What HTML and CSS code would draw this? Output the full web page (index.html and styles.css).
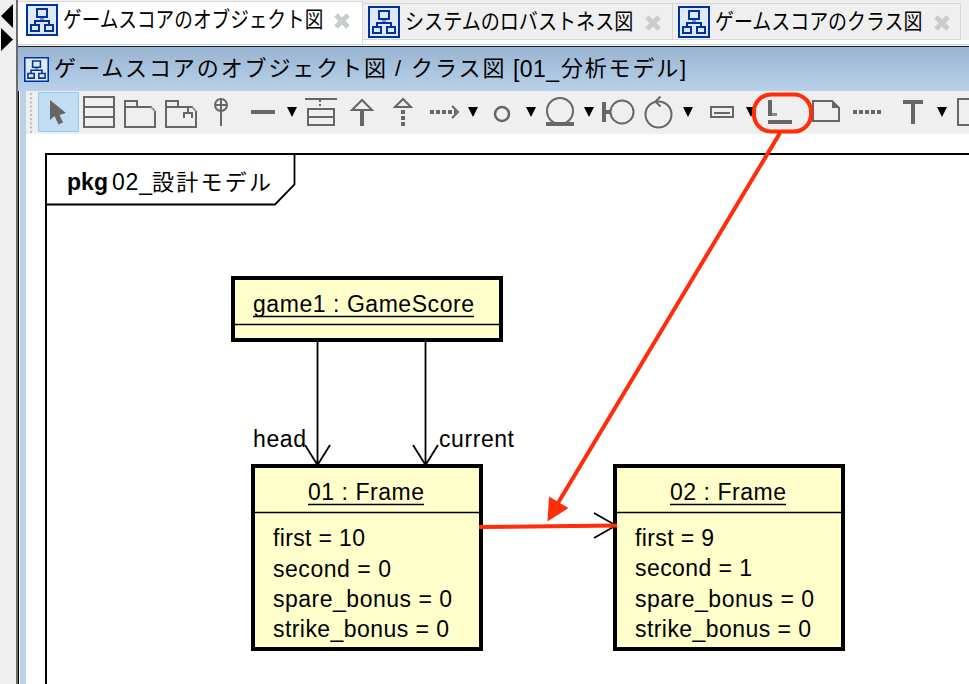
FILE: index.html
```html
<!DOCTYPE html>
<html lang="ja">
<head>
<meta charset="utf-8">
<title>ゲームスコアのオブジェクト図</title>
<link rel="stylesheet" href="styles.css">
</head>
<body>
<svg class="defs" aria-hidden="true">
  <symbol id="diagram" viewBox="0 0 32 32">
    <path d="M1 1H31V31H1Z" fill="#dfe9f8"/>
    <path d="M14 14H18V16H14Z" fill="#6f8fcf"/>
    <path d="M1 1H31V31H1ZM11 5H21V13H11ZM9 20V17H23V20M5 21H13V27H5ZM19 21H27V27H19Z" fill="none" stroke="#0033a0" stroke-width="2"/>
  </symbol>
  <symbol id="close" viewBox="0 0 16 16">
    <path d="M2 2L14 14M14 2L2 14" stroke="#c8cdcb" stroke-width="5" fill="none"/>
  </symbol>
</svg>
<div class="app">
  <aside class="rail">
    <svg width="16" height="52" viewBox="0 0 16 52"><path d="M13 4V28L1 16ZM1 28V51L13 39.500Z"/></svg>
  </aside>
  <main class="main">
    <nav class="tabs">
      <div class="tab active"><svg class="tab-icon"><use href="#diagram"/></svg><span class="label w1"><b>ゲームスコアのオブジェクト図</b></span><svg class="close"><use href="#close"/></svg></div>
      <div class="tab second"><svg class="tab-icon"><use href="#diagram"/></svg><span class="label w2"><b>システムのロバストネス図</b></span><svg class="close"><use href="#close"/></svg></div>
      <div class="tab third"><svg class="tab-icon"><use href="#diagram"/></svg><span class="label w3"><b>ゲームスコアのクラス図</b></span><svg class="close"><use href="#close"/></svg></div>
    </nav>
    <header class="title"><svg class="title-icon"><use href="#diagram"/></svg><h1><span class="kana-a">ゲームスコアのオブジェクト図</span><span class="slash">/</span><span class="kana-b">クラス図</span><span class="num">[01_</span><span class="kana-c">分析モデル</span><span class="bracket">]</span></h1></header>
    <div class="body">
      <div class="edge"></div>
      <div class="content">
        <div class="toolbar">
          <svg width="12" viewBox="26 91 12 43"><path d="M31 93V133" stroke="#bbb" stroke-width="2" stroke-dasharray="2 2.200"/></svg>
          <svg width="42" viewBox="38 91 42 43"><path d="M38.500 92.500H78.500V131.500H38.500Z" fill="#c2dcf2" stroke="#90c8f6" stroke-width="1"/><path d="M50 100V120L54.500 116L58.500 124.500L63 122.500L59.500 115L66 113Z" fill="#666" stroke="none"/></svg>
          <svg width="40" viewBox="80 91 40 43"><path d="M84 97H114V127H84ZM84 107H114M84 117H114"/></svg>
          <svg width="40" viewBox="120 91 40 43"><path d="M152 107H125V127H155V111M125 107V101H137V107"/><path d="M151 107L155 111" stroke="#999"/></svg>
          <svg width="42" viewBox="160 91 42 43"><path d="M193 107H166V127H196V111M166 107V101H178V107M184 118V113H192V118M188 113V108"/><path d="M192 107L196 111" stroke="#999"/></svg>
          <svg width="43" viewBox="202 91 43 43"><circle cx="221" cy="105" r="6"/><path d="M221 98V126M215 105H227"/></svg>
          <svg width="55" viewBox="245 91 55 43"><path d="M251 112H275" stroke-width="4"/><path class="drop" d="M287 107H297L292 117Z"/></svg>
          <svg width="43" viewBox="300 91 43 43"><path d="M305 99H337M308 109H334V125H308ZM308 117H334"/><path d="M320 100V108" stroke-dasharray="2 2"/></svg>
          <svg width="41" viewBox="343 91 41 43"><path d="M352 110L362 100L372 110Z"/><path d="M362 110V126" stroke-width="4"/></svg>
          <svg width="41" viewBox="384 91 41 43"><path d="M395 107L403 99L411 107Z"/><path d="M403 110V126" stroke-width="4" stroke-dasharray="4 2"/></svg>
          <svg width="60" viewBox="425 91 60 43"><path d="M430 112H456" stroke-width="4" stroke-dasharray="4 2"/><path d="M452 106L458 112L452 118"/><path class="drop" d="M468 107H478L473 117Z"/></svg>
          <svg width="55" viewBox="485 91 55 43"><circle cx="502" cy="114" r="7" stroke-width="2.500"/><path class="drop" d="M526 107H536L531 117Z"/></svg>
          <svg width="57" viewBox="540 91 57 43"><circle cx="560" cy="111" r="13"/><path d="M546 124H574" stroke-width="4"/><path class="drop" d="M584 107H594L589 117Z"/></svg>
          <svg width="43" viewBox="597 91 43 43"><path d="M604 102V122M604 112H610" stroke-width="4"/><circle cx="622" cy="112" r="11.500"/></svg>
          <svg width="60" viewBox="640 91 60 43"><circle cx="658.500" cy="114.500" r="13"/><path d="M660.500 96.500L655.500 101.500L660.500 106.500" stroke-width="2"/><path class="drop" d="M683 107H693L688 117Z"/></svg>
          <svg width="60" viewBox="700 91 60 43"><path d="M711 107H733V117H711ZM714 113H730"/><path class="drop" d="M746 107H756L751 117Z"/></svg>
          <svg width="50" viewBox="760 91 50 43"><path d="M770 100V116" stroke-width="4"/><path d="M772 114.500H777" stroke="#888" stroke-width="3"/><path d="M768 122H792" stroke-width="4"/></svg>
          <svg width="37" viewBox="810 91 37 43"><path d="M813 101H832L839 108V121H813Z"/><path d="M832 100V108H840Z" fill="#666" stroke="none"/></svg>
          <svg width="45" viewBox="847 91 45 43"><path d="M853 112H881" stroke-width="4" stroke-dasharray="4 2"/></svg>
          <svg width="60" viewBox="892 91 60 43"><path d="M903 102H923M913 102V124" stroke-width="4"/><path class="drop" d="M937 107H947L942 117Z"/></svg>
          <svg width="17" viewBox="952 91 17 43"><path d="M975 99H958V125H975"/></svg>
        </div>
      </div>
    </div>
  </main>
</div>
<svg class="diagram" width="969" height="684" viewBox="0 0 969 684">
  <g fill="none" stroke="#000" stroke-width="2">
    <path d="M969 154H46V684"/>
    <path d="M47 204.500H275L294.500 184.500V155" stroke-width="1.800"/>
    <path d="M317.500 341V465M305 445L317.500 465L330 445M425.500 341V465M413 445L425.500 465L438 445M594 513L616 525.500L594 538" stroke-width="1.800"/>
  </g>
  <g fill="#ffffcc" stroke="#000" stroke-width="4">
    <path d="M233 278H501V340H233Z"/>
    <path d="M253 466H481V649H253Z"/>
    <path d="M615 466H843V649H615Z"/>
  </g>
  <path d="M235 324.500H499M255 512.500H479M617 512.500H841M253 316.500H474M308 504.500H424M670 504.500H786" stroke="#000" stroke-width="1.700"/>
  <g class="text">
    <text x="67" y="190" textLength="41" class="strong">pkg</text><text x="112" y="190" textLength="40">02_</text><text x="152" y="190" textLength="119" class="jp">設計モデル</text>
    <text x="253" y="312" textLength="221">game1 : GameScore</text>
    <text x="253" y="447" textLength="53">head</text><text x="439" y="447" textLength="75">current</text>
    <text x="308" y="500" textLength="116">01 : Frame</text>
    <text x="273" y="546" textLength="92">first = 10</text><text x="273" y="577" textLength="118">second = 0</text><text x="273" y="607" textLength="179">spare_bonus = 0</text><text x="273" y="637" textLength="176">strike_bonus = 0</text>
    <text x="670" y="500" textLength="116">02 : Frame</text>
    <text x="635" y="546" textLength="79">first = 9</text><text x="635" y="576" textLength="117">second = 1</text><text x="635" y="607" textLength="179">spare_bonus = 0</text><text x="635" y="637" textLength="176">strike_bonus = 0</text>
  </g>
  <g fill="none" stroke="#ff2d08" stroke-width="4">
    <rect x="754" y="94.500" width="57" height="37" rx="17"/>
    <path d="M780 133L558 503M479 527L617 525.500"/>
    <path d="M549 496.500L568.500 508L547.500 521.500Z" fill="#ff2d08" stroke="none"/>
  </g>
</svg>
</body>
</html>
```
FILE: styles.css
```css
* { box-sizing: border-box; }
body { margin: 0; width: 969px; height: 684px; overflow: hidden; background: #efefef; font-family: "Liberation Sans", "Noto Sans CJK JP", sans-serif; color: #000; }
svg { display: block; flex: none; }
.defs { position: absolute; width: 0; height: 0; }
.app { display: flex; height: 684px; }
.rail { width: 16px; }
.main { width: 953px; border-left: 2px solid #6b6b6b; display: flex; flex-direction: column; }
.tabs { height: 46px; flex: none; display: flex; align-items: flex-start; background: linear-gradient(#efefef 40px, #fff 40px, #fff 44px, #d5d5d5 44px, #d5d5d5 45px, #efefef 45px); }
.tab { display: flex; align-items: flex-start; flex: none; margin-top: 3px; height: 37px; border: 1px solid #d7d7d7; border-left: 0; padding: 2px 0 0 6px; }
.tab.active { width: 345px; margin-top: 1px; height: 43px; padding: 2px 0 0 8px; background: #fff; border-bottom: 0; }
.tab.second { width: 310px; padding-left: 5px; }
.tab.third { width: 288px; padding-left: 5px; }
.tab-icon { width: 32px; height: 32px; }
.label { height: 32px; margin-left: 5px; line-height: 32px; font-size: 22px; white-space: nowrap; }
.label b { display: block; font-weight: 400; transform: scaleX(.847); transform-origin: 0 50%; }
.w1 { width: 271px; }
.w2 { width: 240px; }
.w2 b { transform: scaleX(.867); }
.w3 { width: 219px; }
.w3 b { transform: scaleX(.861); }
.close { width: 16px; height: 16px; margin-top: 9px; }
.title { height: 45px; flex: none; display: flex; align-items: center; padding-left: 6px; border-top: 1px solid #222; background: linear-gradient(#99b4d1, #b9d1ea); }
.title-icon { width: 25px; height: 25px; }
h1 { display: flex; margin: 0 0 0 5px; font-size: 22px; font-weight: 400; line-height: 44px; white-space: nowrap; }
h1 span { display: block; }
.kana-a { width: 341px; letter-spacing: 1.9px; }
.slash { width: 16px; }
.kana-b { width: 102px; letter-spacing: 2px; }
.num { width: 48px; font-size: 23px; letter-spacing: .4px; }
.kana-c { width: 119px; letter-spacing: 1.8px; }
.body { flex: 1; display: flex; min-height: 0; }
.edge { width: 8px; background: #b9d1ea; border-left: 1px solid #000; box-shadow: inset 1px 0 #fff; }
.content { width: 943px; background: #fff; }
.toolbar { display: flex; height: 43px; background: #efefef; }
.toolbar svg { height: 43px; fill: none; stroke: #666; stroke-width: 2; }
.toolbar .drop { fill: #000; stroke: none; }
.diagram { position: absolute; left: 0; top: 0; }
.text { font-size: 23px; fill: #000; }
.strong { font-weight: 700; }
.jp { font-size: 22px; }
```
